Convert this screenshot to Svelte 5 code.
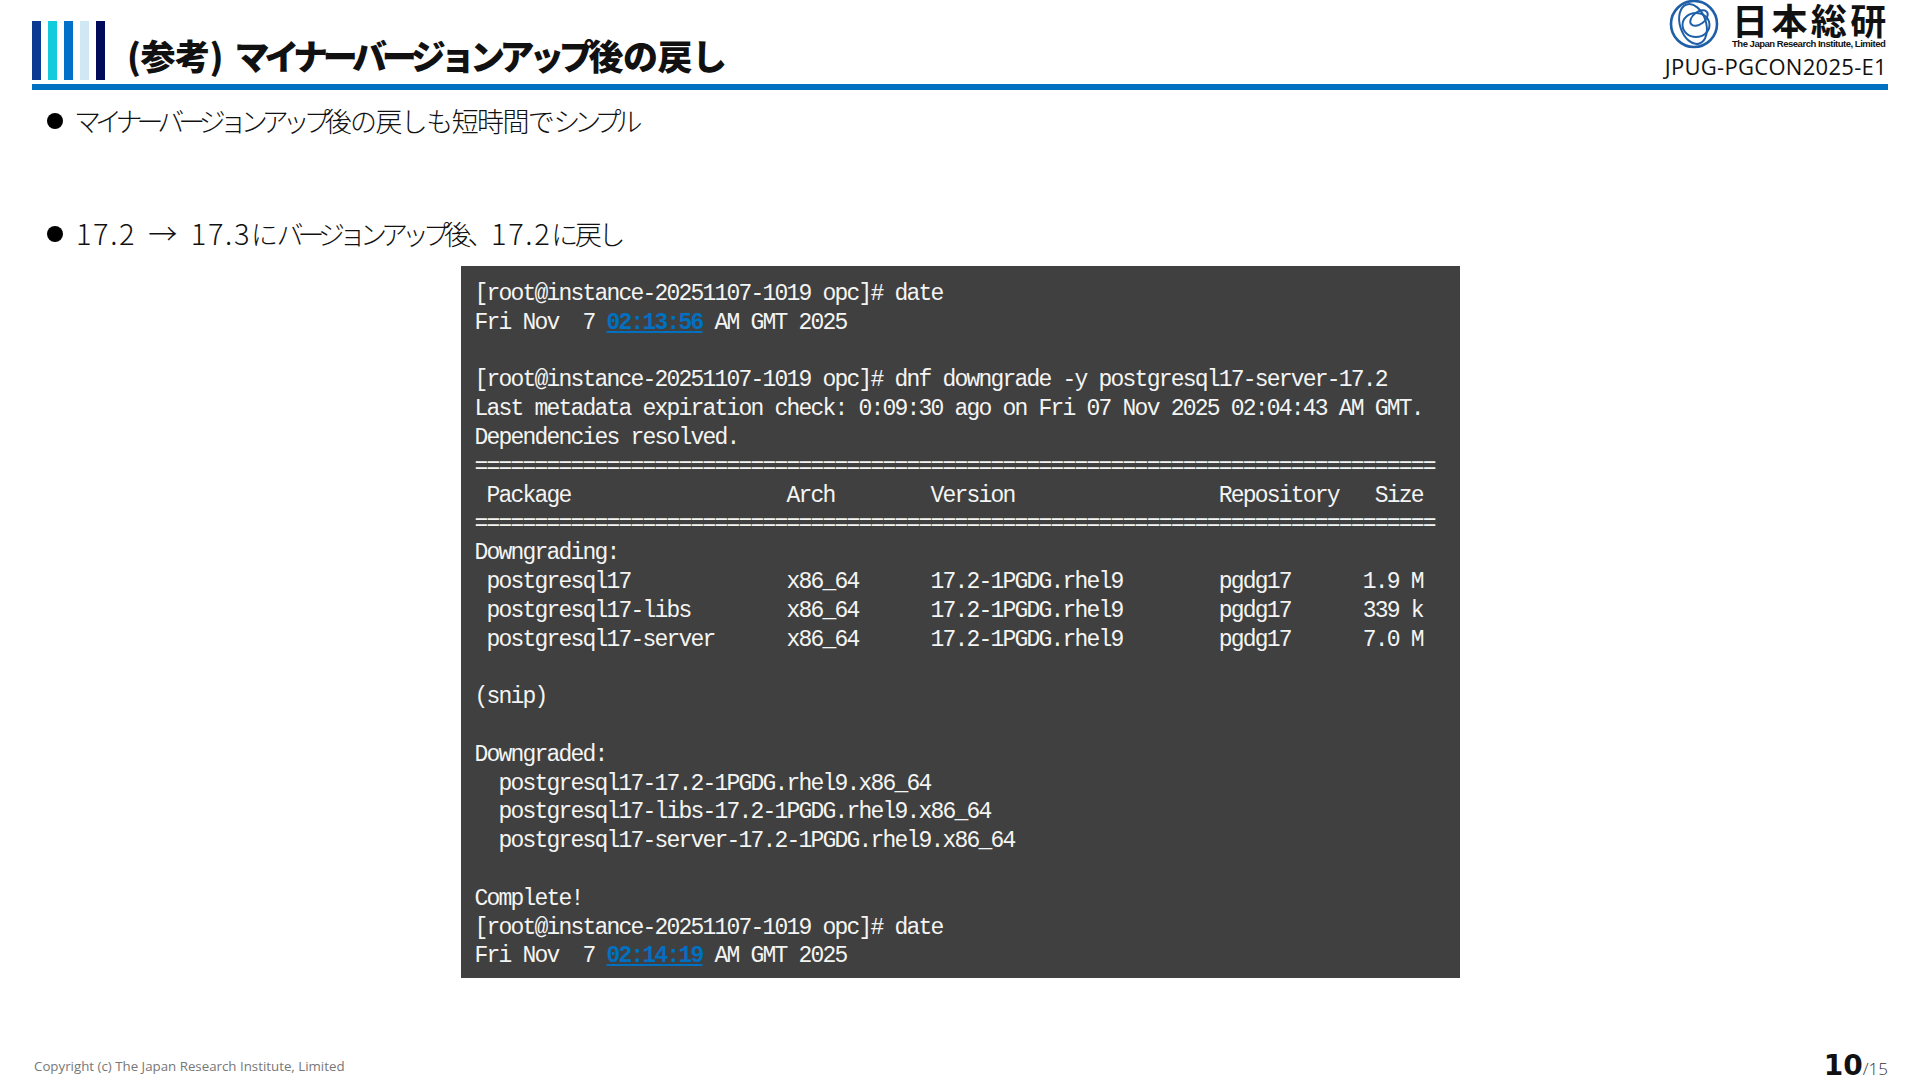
<script lang="ts">
  const bars = ['#0a3a92', '#12cbdc', '#0070c8', '#cfe8f3', '#000a5a'];

  const eq = '='.repeat(80);

  // one entry per terminal row; a {time} row keeps the highlighted clock apart
  const rows: (string | { before: string; time: string; after: string })[] = [
    '[root@instance-20251107-1019 opc]# date',
    { before: 'Fri Nov  7 ', time: '02:13:56', after: ' AM GMT 2025' },
    '',
    '[root@instance-20251107-1019 opc]# dnf downgrade -y postgresql17-server-17.2',
    'Last metadata expiration check: 0:09:30 ago on Fri 07 Nov 2025 02:04:43 AM GMT.',
    'Dependencies resolved.',
    eq,
    ' Package                  Arch        Version                 Repository   Size',
    eq,
    'Downgrading:',
    ' postgresql17             x86_64      17.2-1PGDG.rhel9        pgdg17      1.9 M',
    ' postgresql17-libs        x86_64      17.2-1PGDG.rhel9        pgdg17      339 k',
    ' postgresql17-server      x86_64      17.2-1PGDG.rhel9        pgdg17      7.0 M',
    '',
    '(snip)',
    '',
    'Downgraded:',
    '  postgresql17-17.2-1PGDG.rhel9.x86_64',
    '  postgresql17-libs-17.2-1PGDG.rhel9.x86_64',
    '  postgresql17-server-17.2-1PGDG.rhel9.x86_64',
    '',
    'Complete!',
    '[root@instance-20251107-1019 opc]# date',
    { before: 'Fri Nov  7 ', time: '02:14:19', after: ' AM GMT 2025' }
  ];
</script>

<div class="slide">
  <header class="header">
    <div class="bars">
      {#each bars as color}
        <span class="bar" style="background: {color}"></span>
      {/each}
    </div>
    <h1 class="title">(参考) <span class="title__kana">マイナーバージョンアップ</span>後の戻し</h1>
    <div class="brand">
      <div class="logo">
        <svg class="mark" viewBox="0 0 50 50" width="50" height="50" fill="none" stroke="#1f5fa8" stroke-width="2">
          <circle cx="25" cy="25" r="23" stroke-width="2.6" />
          <ellipse cx="24" cy="25" rx="13" ry="20.5" transform="rotate(-18 24 25)" />
          <ellipse cx="27" cy="26" rx="13.5" ry="12" />
          <ellipse cx="30" cy="19" rx="10" ry="6" transform="rotate(-38 30 19)" />
        </svg>
        <div class="wordmark">
          <span class="wordmark__jp">日本総研</span>
          <span class="wordmark__en">The Japan Research Institute, Limited</span>
        </div>
      </div>
      <div class="docId">JPUG-PGCON2025-E1</div>
    </div>
  </header>
  <div class="rule"></div>

  <main class="content">
    <p class="point point--first">
      <span><span class="point__kana">マイナーバージョンアップ</span>後の戻しも短時間で<span class="point__kana">シンプル</span></span>
    </p>
    <p class="point point--second">
      <span><span class="point__num">17.2 → 17.3 </span>に<span class="point__kana">バージョンアップ</span><span class="point__tight">後、</span><span class="point__num">17.2 </span><span class="point__tight">に戻し</span></span>
    </p>

    <div class="terminal">
      {#each rows as row}
        {#if typeof row === 'string'}
          <div class="terminal__row">{row}</div>
        {:else}
          <div class="terminal__row">{row.before}<span class="terminal__time">{row.time}</span>{row.after}</div>
        {/if}
      {/each}
    </div>
  </main>

  <footer class="footer">
    <span class="copyright">Copyright (c) The Japan Research Institute, Limited</span>
    <span class="page"><b class="page__current">10</b>/15</span>
  </footer>
</div>

<style>
  :global(body) {
    margin: 0;
    background: #fff;
  }

  .slide {
    width: 1920px;
    height: 1080px;
    box-sizing: border-box;
    padding: 0 32px;
    display: flex;
    flex-direction: column;
    overflow: hidden;
    font-family: "Noto Sans CJK JP", sans-serif;
    color: #111;
  }

  .header {
    height: 84px;
    display: flex;
    align-items: flex-end;
    flex-shrink: 0;
  }

  .bars {
    display: flex;
    gap: 7px;
    height: 59px;
    margin-bottom: 4px;
  }

  .bar {
    width: 9px;
  }

  .title {
    margin: 0 0 4px 22px;
    font-size: 35px;
    line-height: 50px;
    font-weight: 900;
    letter-spacing: -0.5px;
    word-spacing: 4px;
    white-space: nowrap;
    color: #111;
    flex: 1;
  }

  .title__kana {
    letter-spacing: -5.35px;
  }

  .brand {
    align-self: flex-start;
    display: flex;
    flex-direction: column;
    align-items: flex-end;
    margin-right: 1px;
  }

  .logo {
    display: flex;
    gap: 13px;
    height: 49px;
  }

  .mark {
    margin-top: -1px;
  }

  .wordmark {
    display: flex;
    flex-direction: column;
    width: 155px;
  }

  .wordmark__jp {
    font-size: 36px;
    line-height: 38px;
    font-weight: 700;
    letter-spacing: 3.4px;
    white-space: nowrap;
  }

  .wordmark__en {
    font-family: "Liberation Sans", sans-serif;
    font-size: 9.5px;
    line-height: 11px;
    font-weight: 700;
    letter-spacing: -0.48px;
    white-space: nowrap;
  }

  .docId {
    margin-top: 5px;
    font-family: "Open Sans", sans-serif;
    font-size: 22px;
    line-height: 24px;
    letter-spacing: 0.3px;
    white-space: nowrap;
  }

  .rule {
    height: 6px;
    background: #0070c0;
    flex-shrink: 0;
  }

  .content {
    flex: 1;
    display: flex;
    flex-direction: column;
  }

  .point {
    margin: 0;
    height: 40px;
    font-size: 27px;
    font-weight: 300;
    line-height: 40px;
    letter-spacing: -1.6px;
    white-space: nowrap;
    display: flex;
    align-items: center;
    gap: 11px;
    padding-left: 15px;
  }

  .point__kana {
    letter-spacing: -6px;
  }

  .point__tight {
    letter-spacing: -3.4px;
  }

  .point__num {
    font-size: 29px;
    line-height: 1;
    letter-spacing: 1.6px;
    word-spacing: 4px;
  }

  .point::before {
    content: '';
    width: 16px;
    height: 16px;
    border-radius: 50%;
    background: #000;
    flex-shrink: 0;
  }

  .point--first {
    margin-top: 11px;
  }

  .point--second {
    margin-top: 73px;
    gap: 13px;
  }

  .terminal {
    width: 999px;
    box-sizing: border-box;
    margin: 12px auto 0;
    padding: 14px 14px 7px;
    background: #404040;
    color: #f4f4f4;
    font-family: "Liberation Mono", monospace;
    font-size: 23px;
    letter-spacing: -1.8px;
  }

  .terminal__row {
    height: 28.8px;
    line-height: 28.8px;
    white-space: pre;
  }

  .terminal__time {
    color: #0070c0;
    font-weight: 700;
    text-decoration: underline;
  }

  .footer {
    height: 46px;
    box-sizing: border-box;
    padding-top: 17px;
    flex-shrink: 0;
    display: flex;
    justify-content: space-between;
    align-items: center;
  }

  .copyright {
    margin-left: 2px;
    font-family: "Open Sans", sans-serif;
    font-size: 13.3px;
    color: #777;
  }

  .page {
    font-family: "Open Sans", sans-serif;
    font-size: 17px;
    font-weight: 300;
    line-height: 1;
    color: #333;
  }

  .page__current {
    font-family: "DejaVu Sans", sans-serif;
    font-size: 28px;
    font-weight: 700;
    color: #111;
  }
</style>
